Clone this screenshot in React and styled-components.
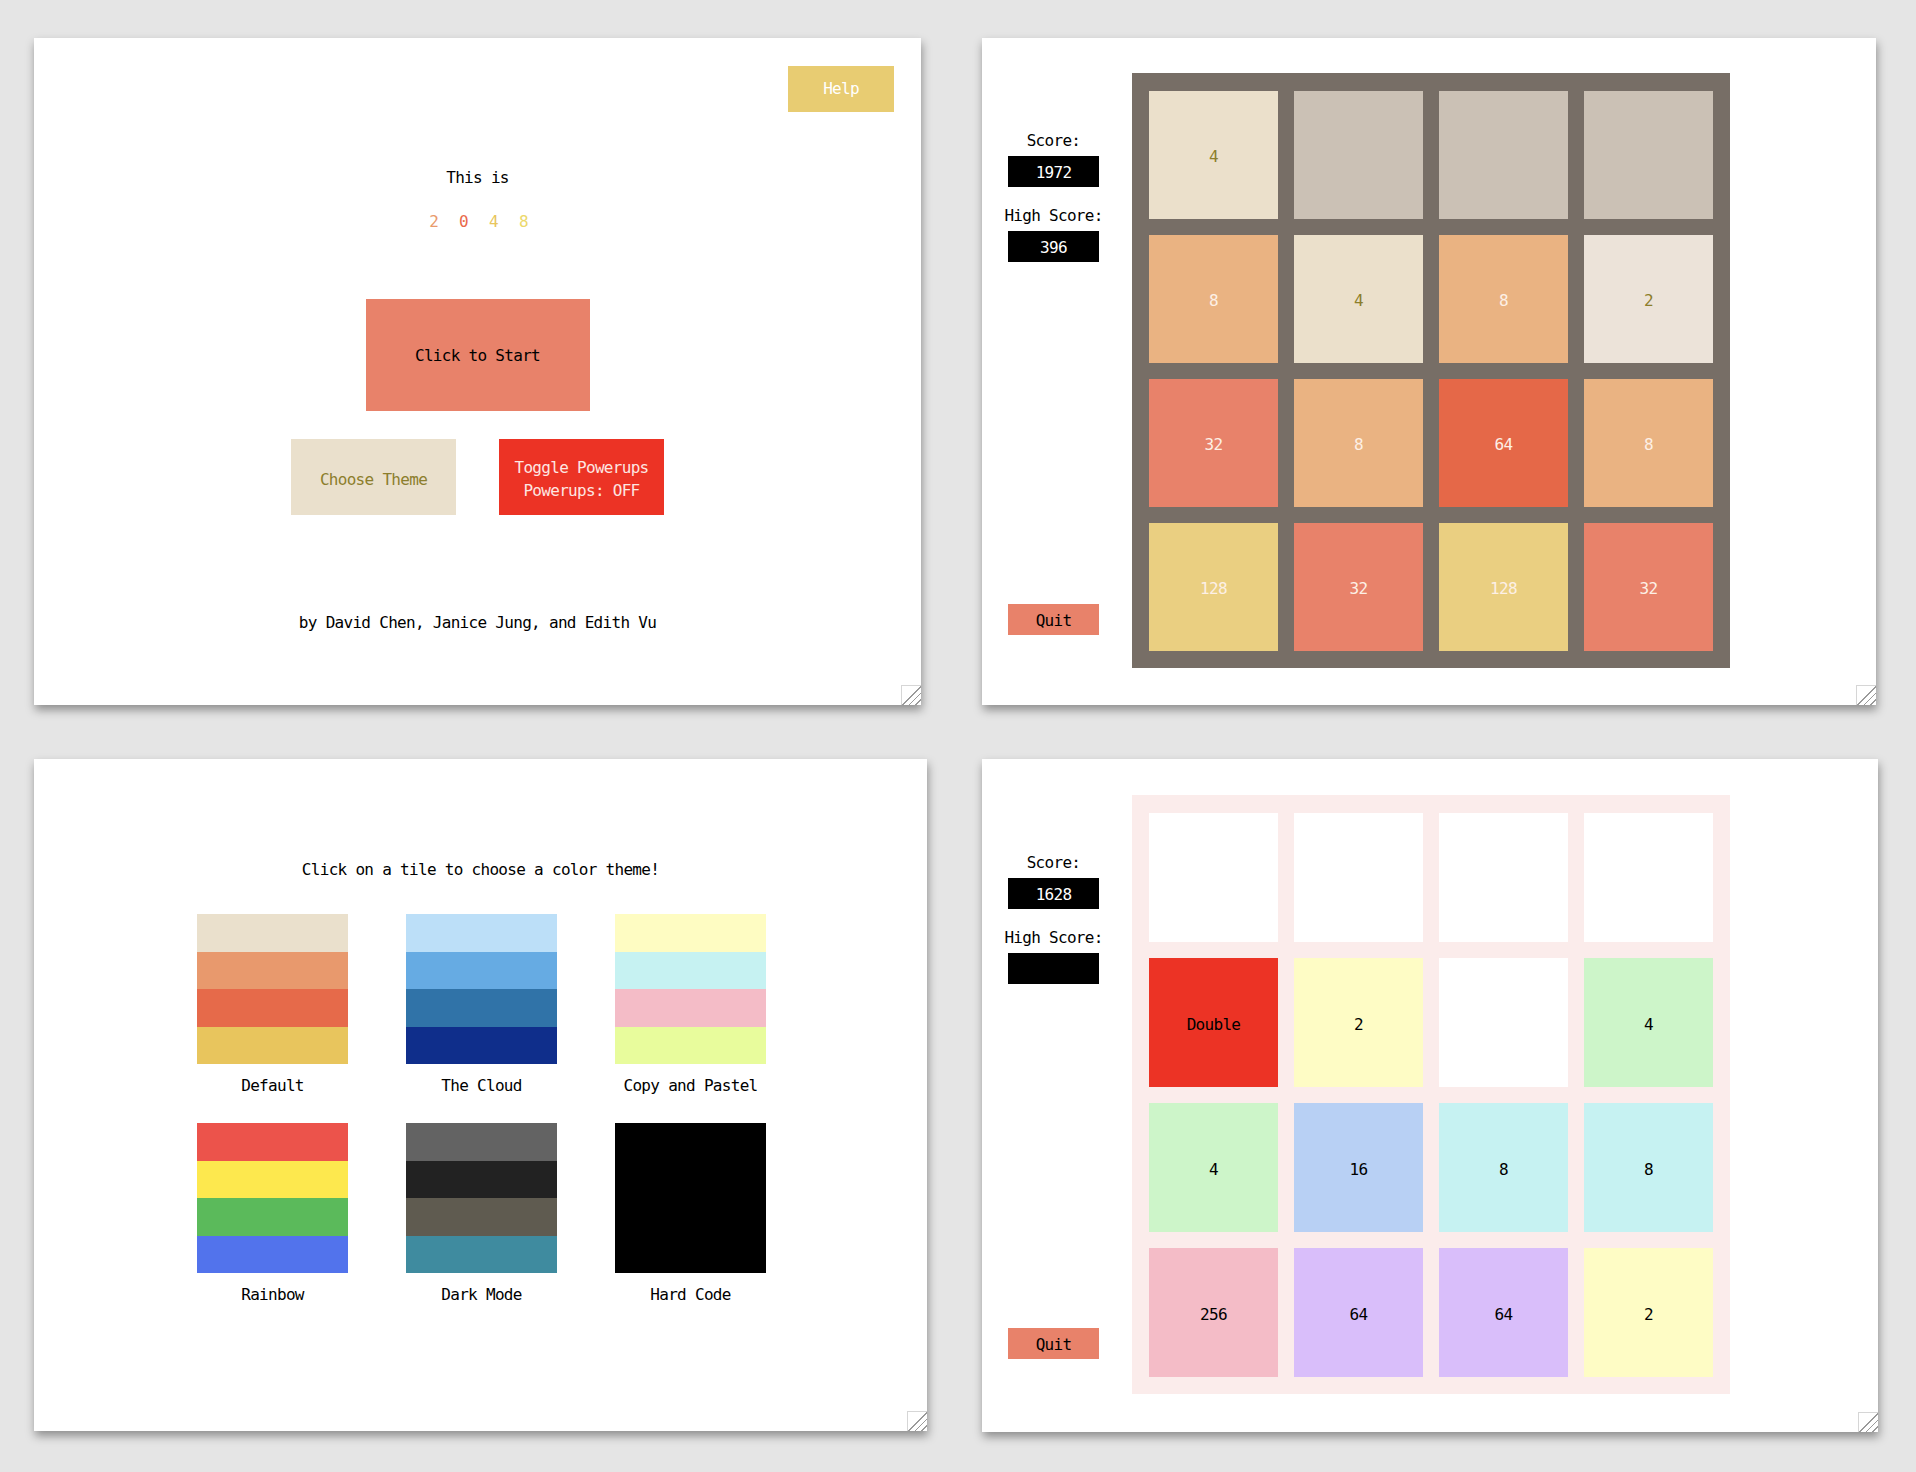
import React from 'react';
import styled, { createGlobalStyle } from 'styled-components';

const GlobalStyle = createGlobalStyle`
  body {
    margin: 0;
    background: #e5e5e5;
    font-family: "DejaVu Sans Mono", "Liberation Mono", monospace;
    font-size: 16px;
    letter-spacing: -0.7px;
  }
`;

const Screens = styled.div`
  display: grid;
  grid-template-columns: 893px 896px;
  column-gap: 55px;
  row-gap: 54px;
  padding: 38px 0 40px 34px;
`;

const Panel = styled.section`
  position: relative;
  width: ${({ $w }) => $w}px;
  height: ${({ $h }) => $h}px;
  background: #fff;
  box-shadow: 1px 5px 9px rgba(0, 0, 0, 0.38);
  overflow: hidden;
  box-sizing: border-box;

  /* resize grip in the corner */
  &::after {
    content: "";
    position: absolute;
    right: 0;
    bottom: 0;
    width: 19px;
    height: 19px;
    border-top: 1px solid #d6d6d6;
    border-left: 1px solid #d6d6d6;
    background:
      linear-gradient(135deg,
        transparent 48%, #9a9a9a 48%, #9a9a9a 53%, transparent 53%,
        transparent 66%, #9a9a9a 66%, #9a9a9a 71%, transparent 71%,
        transparent 84%, #9a9a9a 84%, #9a9a9a 89%, transparent 89%),
      #fff;
  }
`;

/* start screen */

const StartLayout = styled(Panel)`
  display: flex;
  flex-direction: column;
  align-items: center;
`;

const HelpButton = styled.div`
  align-self: flex-end;
  margin: 28px 27px 0 0;
  width: 106px;
  height: 46px;
  background: #e8cc72;
  color: #fff;
  display: flex;
  align-items: center;
  justify-content: center;
  line-height: 20px;
`;

const Line = styled.div`
  line-height: 20px;
  margin-top: ${({ $mt }) => $mt}px;
  color: ${({ $color }) => $color || '#000'};
`;

const Digits = styled.div`
  display: flex;
  gap: 21px;
  line-height: 20px;
  margin-top: 24px;
  padding-left: 2px;
`;

const Digit = styled.span`
  color: ${({ $color }) => $color};
`;

const StartButton = styled.div`
  margin-top: 67px;
  width: 224px;
  height: 112px;
  box-sizing: border-box;
  padding-top: 2px;
  background: #e8826a;
  color: #000;
  display: flex;
  align-items: center;
  justify-content: center;
  line-height: 20px;
`;

const ButtonRow = styled.div`
  display: flex;
  gap: 43px;
  margin-top: 28px;
`;

const SmallButton = styled.div`
  width: 165px;
  height: 76px;
  box-sizing: border-box;
  padding-top: 4px;
  background: ${({ $bg }) => $bg};
  color: ${({ $fg }) => $fg};
  display: flex;
  flex-direction: column;
  align-items: center;
  justify-content: center;
  line-height: 23px;
  text-align: center;
`;

/* game screens */

const GameLayout = styled(Panel)`
  display: flex;
  align-items: flex-start;
  padding: ${({ $top }) => $top}px 0 0 26px;
`;

const Sidebar = styled.div`
  width: 91px;
  height: ${({ $h }) => $h}px;
  margin-right: 33px;
  padding-top: 58px;
  box-sizing: border-box;
  display: flex;
  flex-direction: column;
  align-items: center;
`;

const Label = styled.div`
  line-height: 20px;
  white-space: nowrap;
  margin-top: ${({ $mt }) => $mt || 0}px;
`;

const ValueBox = styled.div`
  width: 91px;
  height: 31px;
  margin-top: 5px;
  padding-top: 2px;
  box-sizing: border-box;
  background: #000;
  color: #fff;
  display: flex;
  align-items: center;
  justify-content: center;
`;

const QuitButton = styled.div`
  margin-top: auto;
  margin-bottom: ${({ $mb }) => $mb}px;
  width: 91px;
  height: 31px;
  padding-top: 2px;
  box-sizing: border-box;
  background: #e8826a;
  color: #000;
  display: flex;
  align-items: center;
  justify-content: center;
`;

const Board = styled.div`
  display: grid;
  grid-template-columns: repeat(4, 129px);
  grid-auto-rows: ${({ $row }) => $row}px;
  gap: 16px;
  padding: 18px 17px 17px;
  background: ${({ $bg }) => $bg};
`;

const Tile = styled.div`
  background: ${({ $bg }) => $bg};
  color: ${({ $fg }) => $fg || '#000'};
  display: flex;
  align-items: center;
  justify-content: center;
  padding-top: 3px;
`;

/* theme screen */

const ThemeLayout = styled(Panel)`
  display: flex;
  flex-direction: column;
  align-items: center;
  padding-top: 101px;
`;

const ThemeGrid = styled.div`
  display: grid;
  grid-template-columns: repeat(3, 151px);
  column-gap: 58px;
  row-gap: 27px;
  margin-top: 34px;
  padding-left: 2px;
`;

const ThemeOption = styled.div`
  display: flex;
  flex-direction: column;
  align-items: center;
`;

const Swatch = styled.div`
  width: 151px;
  height: 150px;
  display: flex;
  flex-direction: column;
`;

const Stripe = styled.div`
  flex: 1;
  background: ${({ $bg }) => $bg};
`;

const ThemeName = styled.div`
  line-height: 20px;
  margin-top: 12px;
`;

const LIGHT = '#fdf0e6';
const OLIVE = '#8c7e2c';
const EMPTY = '#cbc1b5';

const defaultTiles = [
  ['4', '#ebe0cb', OLIVE], ['', EMPTY], ['', EMPTY], ['', EMPTY],
  ['8', '#eab382', LIGHT], ['4', '#ebe0cb', OLIVE], ['8', '#eab382', LIGHT], ['2', '#ece3d9', OLIVE],
  ['32', '#e8826a', LIGHT], ['8', '#eab382', LIGHT], ['64', '#e56848', LIGHT], ['8', '#eab382', LIGHT],
  ['128', '#eacf81', LIGHT], ['32', '#e8826a', LIGHT], ['128', '#eacf81', LIGHT], ['32', '#e8826a', LIGHT],
];

const pastelTiles = [
  ['', '#fff'], ['', '#fff'], ['', '#fff'], ['', '#fff'],
  ['Double', '#ec3325'], ['2', '#fefcc5'], ['', '#fff'], ['4', '#cdf5c9'],
  ['4', '#cdf5c9'], ['16', '#b8d0f4'], ['8', '#c6f2f2'], ['8', '#c6f2f2'],
  ['256', '#f4bcc7'], ['64', '#d9befa'], ['64', '#d9befa'], ['2', '#fefcc5'],
];

const themes = [
  { name: 'Default', colors: ['#eae0cc', '#e8996d', '#e66a4a', '#e8c55d'] },
  { name: 'The Cloud', colors: ['#bcdff8', '#66abe3', '#3073a8', '#0f2e8b'] },
  { name: 'Copy and Pastel', colors: ['#fefcc2', '#c6f2f2', '#f4bcc7', '#e8fc9c'] },
  { name: 'Rainbow', colors: ['#ec534b', '#fde84e', '#5bba5b', '#5273ec'] },
  { name: 'Dark Mode', colors: ['#636363', '#222222', '#5f5b50', '#3f8b9f'] },
  { name: 'Hard Code', colors: ['#000', '#000', '#000', '#000'] },
];

const StartScreen = () => (
  <StartLayout $w={887} $h={667}>
    <HelpButton>Help</HelpButton>
    <Line $mt={56}>This is</Line>
    <Digits>
      <Digit $color="#e99a6c">2</Digit>
      <Digit $color="#e9694a">0</Digit>
      <Digit $color="#e8c55d">4</Digit>
      <Digit $color="#ecd86b">8</Digit>
    </Digits>
    <StartButton>Click to Start</StartButton>
    <ButtonRow>
      <SmallButton $bg="#eae0cc" $fg="#8c7e2c">Choose Theme</SmallButton>
      <SmallButton $bg="#ec3325" $fg="#fde6e2">
        <span>Toggle Powerups</span>
        <span>Powerups: OFF</span>
      </SmallButton>
    </ButtonRow>
    <Line $mt={98}>by David Chen, Janice Jung, and Edith Vu</Line>
  </StartLayout>
);

const GameScreen = ({ w, h, top, row, boardBg, tiles, score, high, quitGap }) => (
  <GameLayout $w={w} $h={h} $top={top}>
    <Sidebar $h={row * 4 + 83}>
      <Label>Score:</Label>
      <ValueBox>{score}</ValueBox>
      <Label $mt={19}>High Score:</Label>
      <ValueBox>{high}</ValueBox>
      <QuitButton $mb={quitGap}>Quit</QuitButton>
    </Sidebar>
    <Board $bg={boardBg} $row={row}>
      {tiles.map(([text, bg, fg], i) => (
        <Tile key={i} $bg={bg} $fg={fg}>{text}</Tile>
      ))}
    </Board>
  </GameLayout>
);

const ThemeScreen = () => (
  <ThemeLayout $w={893} $h={672}>
    <Line>Click on a tile to choose a color theme!</Line>
    <ThemeGrid>
      {themes.map((t) => (
        <ThemeOption key={t.name}>
          <Swatch>
            {t.colors.map((c, i) => <Stripe key={i} $bg={c} />)}
          </Swatch>
          <ThemeName>{t.name}</ThemeName>
        </ThemeOption>
      ))}
    </ThemeGrid>
  </ThemeLayout>
);

export default function App() {
  return (
    <>
      <GlobalStyle />
      <Screens>
        <StartScreen />
        <GameScreen
          w={894} h={667} top={35} row={128}
          boardBg="#776e66" tiles={defaultTiles}
          score="1972" high="396" quitGap={33}
        />
        <ThemeScreen />
        <GameScreen
          w={896} h={673} top={36} row={129}
          boardBg="#fbeceb" tiles={pastelTiles}
          score="1628" high="" quitGap={35}
        />
      </Screens>
    </>
  );
}
